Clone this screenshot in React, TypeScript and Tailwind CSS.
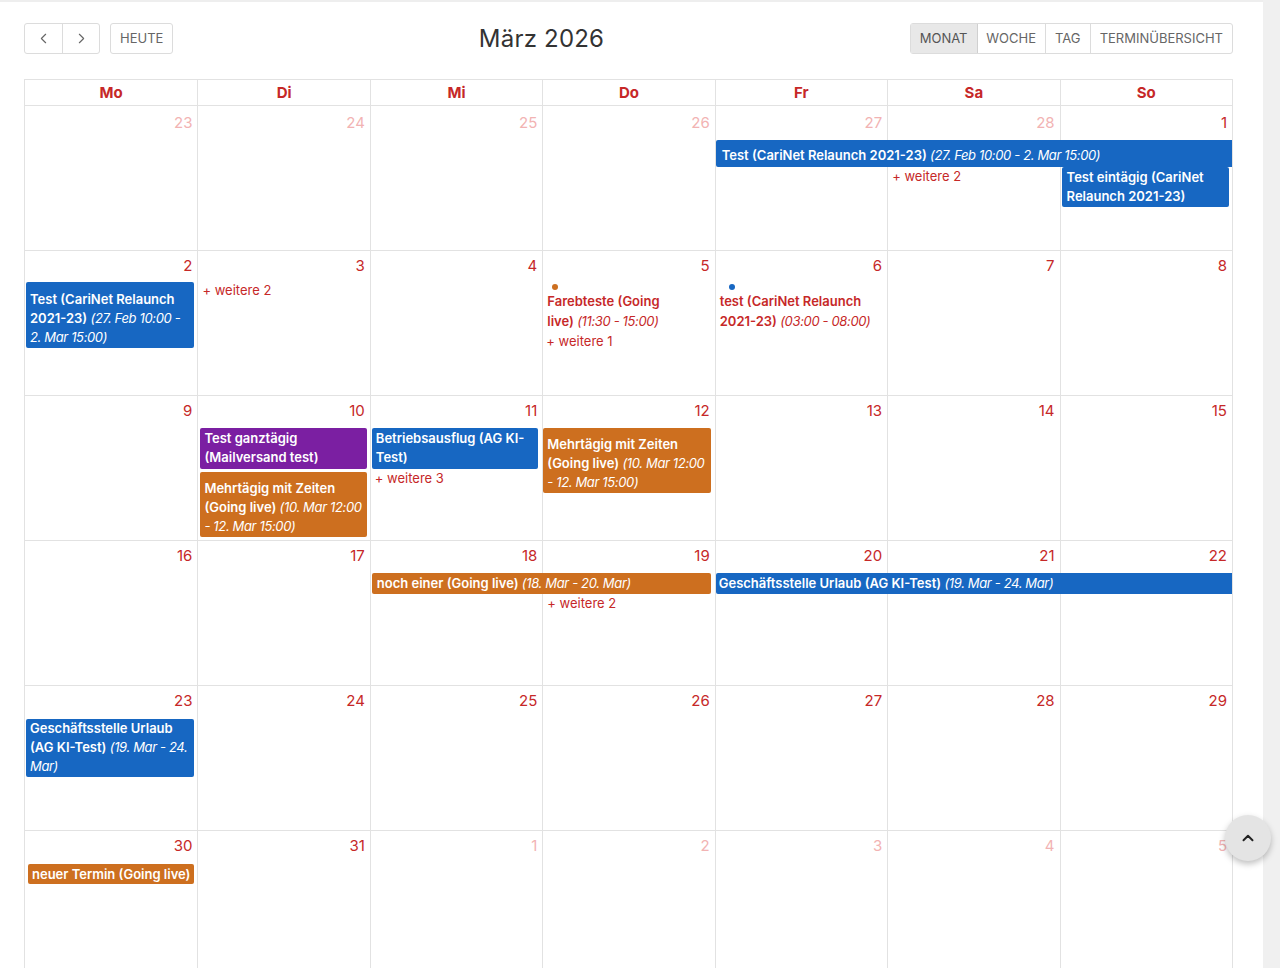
import { ChevronLeft, ChevronRight, ChevronUp } from "lucide-react";

const DAYS = ["Mo", "Di", "Mi", "Do", "Fr", "Sa", "So"];
const COL = ["col-start-1", "col-start-2", "col-start-3", "col-start-4", "col-start-5", "col-start-6", "col-start-7"];

type Day = { n: number; faded?: boolean };

function Ev({
  title,
  time,
  color,
  className = "",
}: {
  title: string;
  time?: string;
  color: string;
  className?: string;
}) {
  return (
    <div className={`${color} text-white text-[13px] leading-[19px] rounded-[2px] px-[4px] ${className}`}>
      <span className="font-semibold">{title}</span>
      {time && <span className="italic font-normal tracking-[-0.35px]"> {time}</span>}
    </div>
  );
}

function More({ n, className = "" }: { n: number; className?: string }) {
  return <div className={`text-[13px] leading-[18px] text-[#c62828] pl-[5px] ${className}`}>+ weitere {n}</div>;
}

function clsxs(...a: (string | false | undefined)[]) {
  return a.filter(Boolean).join(" ");
}

function Week({
  days,
  children,
  last,
  first,
}: {
  days: Day[];
  children?: React.ReactNode;
  last?: boolean;
  first?: boolean;
}) {
  return (
    <div
      className={clsxs(
        "grid grid-cols-7 h-[145px]",
        first ? "grid-rows-[34px_auto_auto_1fr]" : "grid-rows-[32px_auto_auto_1fr]",
        !last && "border-b border-[#e2e2e2]",
      )}
    >
      {days.map((d, i) => (
        <div
          key={i}
          className={clsxs(
            COL[i],
            "row-span-full row-start-1 text-right pr-[5px] text-[15px] leading-[22px]",
            first ? "pt-[6px]" : "pt-[4px]",
            i > 0 && "border-l border-[#e2e2e2]",
            d.faded ? "text-[#f2b3b3]" : "text-[#c62828]",
          )}
        >
          {d.n}
        </div>
      ))}
      {children}
    </div>
  );
}

const BLUE = "bg-[#1767c2]";
const ORANGE = "bg-[#cd6f1f]";
const PURPLE = "bg-[#7b1fa2]";

export default function App() {
  return (
    <div className="h-screen overflow-hidden flex bg-white font-['Inter',sans-serif] text-[#333]">
      <div className="flex-1 border-t-2 border-[#eeeeee] pl-6 pr-[30px] pt-[21px]">
        <div className="flex items-center justify-between h-[31px]">
          <div className="flex items-center gap-[10px]">
            <div className="flex h-[31px] border border-[#dcdcdc] rounded-[3px] text-[#666]">
              <button className="w-[37px] flex items-center justify-center">
                <ChevronLeft size={17} strokeWidth={1.6} />
              </button>
              <button className="w-[37px] flex items-center justify-center border-l border-[#dcdcdc]">
                <ChevronRight size={17} strokeWidth={1.6} />
              </button>
            </div>
            <button className="h-[31px] px-[9px] border border-[#dcdcdc] rounded-[3px] text-[13px] text-[#666]">
              HEUTE
            </button>
          </div>
          <div className="text-[24px] text-[#333] tracking-[0.2px] pt-[1px]">März 2026</div>
          <div className="flex h-[31px] border border-[#dcdcdc] rounded-[3px] text-[13px] text-[#666]">
            <button className="w-[67px] bg-[#e8e8e8] text-[#555] border-r border-[#d0d0d0]">MONAT</button>
            <button className="w-[68px] border-r border-[#dcdcdc]">WOCHE</button>
            <button className="w-[45px] border-r border-[#dcdcdc]">TAG</button>
            <button className="flex-1 px-[9px]">TERMINÜBERSICHT</button>
          </div>
        </div>

        <div className="mt-[25px] border border-[#e2e2e2]">
          <div className="grid grid-cols-7 h-[26px] border-b border-[#e2e2e2]">
            {DAYS.map((d, i) => (
              <div
                key={d}
                className={clsxs(
                  "flex items-center justify-center text-[15px] font-bold text-[#c62828] pt-[2px]",
                  i > 0 && "border-l border-[#e2e2e2]",
                )}
              >
                {d}
              </div>
            ))}
          </div>

          <Week
            first
            days={[
              { n: 23, faded: true },
              { n: 24, faded: true },
              { n: 25, faded: true },
              { n: 26, faded: true },
              { n: 27, faded: true },
              { n: 28, faded: true },
              { n: 1 },
            ]}
          >
            <Ev
              title="Test (CariNet Relaunch 2021-23)"
              time="(27. Feb 10:00 - 2. Mar 15:00)"
              color={BLUE}
              className="col-start-5 col-span-3 row-start-2 ml-[1px] h-[27px] pt-[6px] pl-[6px] rounded-r-none"
            />
            <More n={2} className="col-start-6 row-start-3 pt-[0px]" />
            <Ev
              title="Test eintägig (CariNet Relaunch 2021-23)"
              color={BLUE}
              className="col-start-7 row-start-3 ml-[2px] mr-[3px] pt-[1px] pb-[1px] pl-[5px] self-start"
            />
          </Week>

          <Week days={[2, 3, 4, 5, 6, 7, 8].map((n) => ({ n }))}>
            <Ev
              title="Test (CariNet Relaunch 2021-23)"
              time="(27. Feb 10:00 - 2. Mar 15:00)"
              color={BLUE}
              className="col-start-1 row-start-2 ml-[1px] mr-[3px] pt-[8px] pb-[1px] self-start -mt-[1px]"
            />
            <More n={2} className="col-start-2 row-start-2 -mt-[2px]" />
            <div className="col-start-4 row-start-2 pl-[5px] pr-[26px] text-[13px] leading-[20px] text-[#c62828] -mt-[1px]">
              <div className="w-[6px] h-[6px] rounded-full bg-[#cd6f1f] ml-[5px] mt-[2px] mb-[1px]" />
              <span className="font-semibold">Farebteste (Going live)</span>
              <span className="italic tracking-[-0.35px]"> (11:30 - 15:00)</span>
              <div className="leading-[20px] -ml-[1px]">+ weitere 1</div>
            </div>
            <div className="col-start-5 row-start-2 pl-[5px] pr-[3px] text-[13px] leading-[20px] text-[#c62828] -mt-[1px]">
              <div className="w-[6px] h-[6px] rounded-full bg-[#1767c2] ml-[9px] mt-[2px] mb-[1px]" />
              <span className="font-semibold">test (CariNet Relaunch 2021-23)</span>
              <span className="italic tracking-[-0.35px]"> (03:00 - 08:00)</span>
            </div>
          </Week>

          <Week days={[9, 10, 11, 12, 13, 14, 15].map((n) => ({ n }))}>
            <Ev
              title="Test ganztägig (Mailversand test)"
              color={PURPLE}
              className="col-start-2 row-start-2 ml-[3px] mr-[3px] pt-[1px] pb-[2px] leading-[18px]"
            />
            <Ev
              title="Mehrtägig mit Zeiten (Going live)"
              time="(10. Mar 12:00 - 12. Mar 15:00)"
              color={ORANGE}
              className="col-start-2 row-start-3 ml-[3px] mr-[3px] mt-[3px] pt-[7px] pb-[1px] self-start"
            />
            <Ev
              title="Betriebsausflug (AG KI-Test)"
              color={BLUE}
              className="col-start-3 row-start-2 ml-[2px] mr-[4px] pt-[1px] pb-[2px] leading-[18px]"
            />
            <More n={3} className="col-start-3 row-start-3 pl-[4px] pt-[0px]" />
            <Ev
              title="Mehrtägig mit Zeiten (Going live)"
              time="(10. Mar 12:00 - 12. Mar 15:00)"
              color={ORANGE}
              className="col-start-4 row-start-2 row-span-2 ml-[1px] mr-[4px] pt-[7px] pb-[1px] self-start"
            />
          </Week>

          <Week days={[16, 17, 18, 19, 20, 21, 22].map((n) => ({ n }))}>
            <Ev
              title="noch einer (Going live)"
              time="(18. Mar - 20. Mar)"
              color={ORANGE}
              className="col-start-3 col-span-2 row-start-2 ml-[2px] mr-[4px] h-[21px] pt-[1px] pl-[5px]"
            />
            <Ev
              title="Geschäftsstelle Urlaub (AG KI-Test)"
              color={BLUE}
              time="(19. Mar - 24. Mar)"
              className="col-start-5 col-span-3 row-start-2 ml-[1px] h-[21px] pt-[1px] pl-[3px] rounded-r-none"
            />
            <More n={2} className="col-start-4 row-start-3 pl-[5px] pt-[0px]" />
          </Week>

          <Week days={[23, 24, 25, 26, 27, 28, 29].map((n) => ({ n }))}>
            <Ev
              title="Geschäftsstelle Urlaub (AG KI-Test)"
              time="(19. Mar - 24. Mar)"
              color={BLUE}
              className="col-start-1 row-start-2 ml-[1px] mr-[3px] pt-[0px] pb-[1px] mt-[1px] self-start"
            />
          </Week>

          <Week
            last
            days={[
              { n: 30 },
              { n: 31 },
              { n: 1, faded: true },
              { n: 2, faded: true },
              { n: 3, faded: true },
              { n: 4, faded: true },
              { n: 5, faded: true },
            ]}
          >
            <Ev
              title="neuer Termin (Going live)"
              color={ORANGE}
              className="col-start-1 row-start-2 ml-[3px] mr-[3px] mt-[1px] h-[20px] leading-[20px] self-start"
            />
          </Week>
        </div>
      </div>
      <div className="w-[17px] bg-[#f0f0f0]" />

      <button className="fixed left-[1225px] top-[815px] w-[46px] h-[46px] rounded-full bg-[#e4e4e4] shadow-[0_3px_6px_rgba(0,0,0,0.25)] flex items-center justify-center text-[#222]">
        <ChevronUp size={18} strokeWidth={2.6} />
      </button>
    </div>
  );
}
